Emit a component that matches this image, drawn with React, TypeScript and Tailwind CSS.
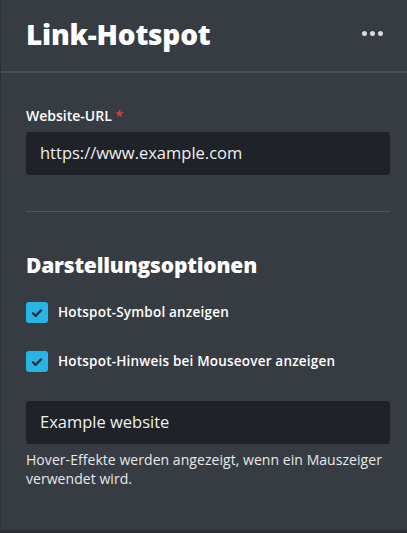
import React from "react";

function Check() {
  return (
    <span className="flex h-[21px] w-[22px] shrink-0 items-center justify-center rounded-[3px] bg-[#27b5e6]">
      <svg width="14" height="14" viewBox="0 0 24 24" fill="none" stroke="#2b2f35" strokeWidth="4" strokeLinecap="round" strokeLinejoin="round">
        <path d="M5 12.5l4.5 4.5L19 7.5" />
      </svg>
    </span>
  );
}

export default function App() {
  return (
    <div
      className="flex h-[533px] w-[407px] flex-col bg-[#373c42] border-l border-[#2e3237] border-b-[3px] border-b-[#2b2f34] text-white"
      style={{ fontFamily: '"Open Sans", "Noto Sans", sans-serif' }}
    >
      <div className="flex h-[73px] shrink-0 items-center justify-between pl-[25px] pr-[24px] border-b-2 border-[#4a4f56]">
        <h1 className="text-[28px] font-extrabold tracking-[-0.2px] leading-none pb-[4px]">Link-Hotspot</h1>
        <div className="flex gap-[3px] pb-[4px]">
          <span className="h-[5px] w-[5px] rounded-full bg-[#d8dadd]" />
          <span className="h-[5px] w-[5px] rounded-full bg-[#d8dadd]" />
          <span className="h-[5px] w-[5px] rounded-full bg-[#d8dadd]" />
        </div>
      </div>
      <div className="flex flex-col px-[25px] pr-[17px]">
        <label className="mt-[34px] text-[14px] font-semibold leading-[18px]">
          Website-URL <span className="text-[#e0433b]">*</span>
        </label>
        <div className="mt-[7px] flex h-[43px] items-center rounded-[3px] bg-[#1f2226] px-[14px] text-[16.5px] text-[#eef0f2]">
          https://www.example.com
        </div>
        <div className="mt-[36px] h-px bg-[#53585e]" />
        <h2 className="mt-[40px] text-[21px] font-extrabold leading-[26px] tracking-[-0.2px]">Darstellungsoptionen</h2>
        <div className="mt-[24px] flex items-center gap-[10px]">
          <Check />
          <span className="text-[13.5px] font-semibold tracking-[0.2px]">Hotspot-Symbol anzeigen</span>
        </div>
        <div className="mt-[28px] flex items-center gap-[10px]">
          <Check />
          <span className="text-[13.5px] font-semibold tracking-[0.2px]">Hotspot-Hinweis bei Mouseover anzeigen</span>
        </div>
        <div className="mt-[29px] flex h-[43px] items-center rounded-[3px] bg-[#1f2226] px-[14px] text-[16.5px] text-[#eef0f2]">
          Example website
        </div>
        <p className="mt-[6px] text-[14px] leading-[19px] tracking-[0.05px] text-[#e6e8ea]">
          Hover-Effekte werden angezeigt, wenn ein Mauszeiger verwendet wird.
        </p>
      </div>
    </div>
  );
}
